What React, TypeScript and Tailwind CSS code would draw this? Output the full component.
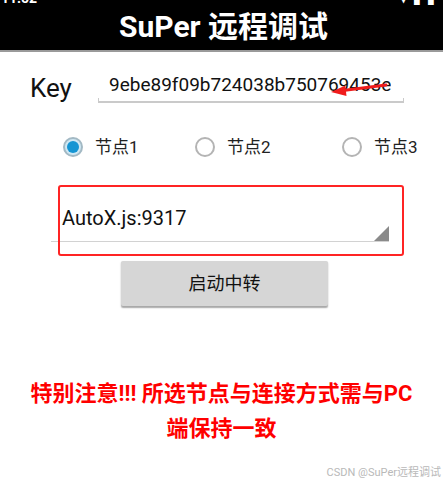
import React from "react";

const latin = "font-['Roboto','Noto_Sans_CJK_SC',sans-serif]";

function Radio({ label, checked, className = "" }: { label: string; checked?: boolean; className?: string }) {
  return (
    <div className={`flex items-center ${className}`}>
      {checked ? (
        <div className="flex h-5 w-5 items-center justify-center rounded-full border-2 border-[#a3b9c4] bg-[#cfe8f4]">
          <div className="h-3 w-3 rounded-full bg-[#1595d3]" />
        </div>
      ) : (
        <div className="h-5 w-5 rounded-full border-2 border-[#b4b4b4] bg-white" />
      )}
      <span className="ml-3 text-[17px] leading-6 text-[#222]">{label}</span>
    </div>
  );
}

export default function App() {
  return (
    <div className={`relative h-[485px] w-[443px] overflow-hidden bg-white ${latin}`}>
      {/* app bar (status bar scrolled mostly out of view) */}
      <header className="relative flex h-[52px] items-center justify-center border-b-2 border-[#9a9a9a] bg-black">
        <span className="absolute left-[1px] top-[-12px] text-[14px] font-bold text-white">11:52</span>
        <span className="absolute left-[54px] top-[-12px] text-[14px] font-bold text-white">▪</span>
        <span className="absolute right-[2px] top-[-12px] text-[14px] font-bold tracking-[6px] text-white">▾▮▮</span>
        <h1 className="pl-[4px] pt-[4px] text-[30px] font-bold leading-none text-white">SuPer 远程调试</h1>
      </header>

      {/* key input */}
      <div className="mt-[21px] flex items-center pl-[30px]">
        <span className="w-[68px] text-[26px] leading-[30px] text-[#111]">Key</span>
        <div className="relative w-[306px]">
          <div className="pl-[11px]">
            <div className="h-[24px] w-[282px] overflow-hidden whitespace-nowrap text-[19px] leading-[24px] text-[#111]">
              9ebe89f09b724038b750769453e1
            </div>
          </div>
          <div className="mt-[1px] h-[5px] border-x border-b-2 border-[#cacaca]" />
          <svg className="absolute left-[228px] top-[5px]" width="64" height="20" viewBox="0 0 64 20">
            <line x1="60" y1="7" x2="17" y2="12.6" stroke="#f01c1c" strokeWidth="3" strokeLinecap="round" />
            <polygon points="5,14 20.5,18 19.3,7.5" fill="#f01c1c" />
          </svg>
        </div>
      </div>

      {/* node selection */}
      <div className="mt-[32px] flex pl-[63px]">
        <Radio label="节点1" checked className="w-[132px]" />
        <Radio label="节点2" className="w-[147px]" />
        <Radio label="节点3" />
      </div>

      {/* connection spinner */}
      <div className="relative ml-[51px] mt-[36px] w-[338px]">
        <div className="flex h-[47px] items-center border-b border-[#d2d2d2] pl-[11px] text-[20px] text-[#111]">
          AutoX.js:9317
        </div>
        <div className="absolute bottom-[1px] right-0 h-0 w-0 border-b-[15px] border-l-[15px] border-b-[#8a8a8a] border-l-transparent" />
        <div className="absolute left-[7px] top-[-10px] h-[71px] w-[346px] rounded-[3px] border-2 border-[#ff2424]" />
      </div>

      <button className="ml-[121px] mt-[19px] flex h-[45px] w-[207px] items-center justify-center rounded-[2px] bg-[#d6d6d6] text-[18px] text-[#111] shadow-[0_1.5px_1.5px_rgba(0,0,0,0.35)]">
        启动中转
      </button>

      <p className="mt-[70px] text-center text-[22px] font-bold leading-[35px] text-[#ff0000]">
        特别注意!!! 所选节点与连接方式需与PC
        <br />
        端保持一致
      </p>

      <span className="absolute bottom-[4px] right-[2px] text-[11px] text-[#b9b9b9]">CSDN @SuPer远程调试</span>
    </div>
  );
}
